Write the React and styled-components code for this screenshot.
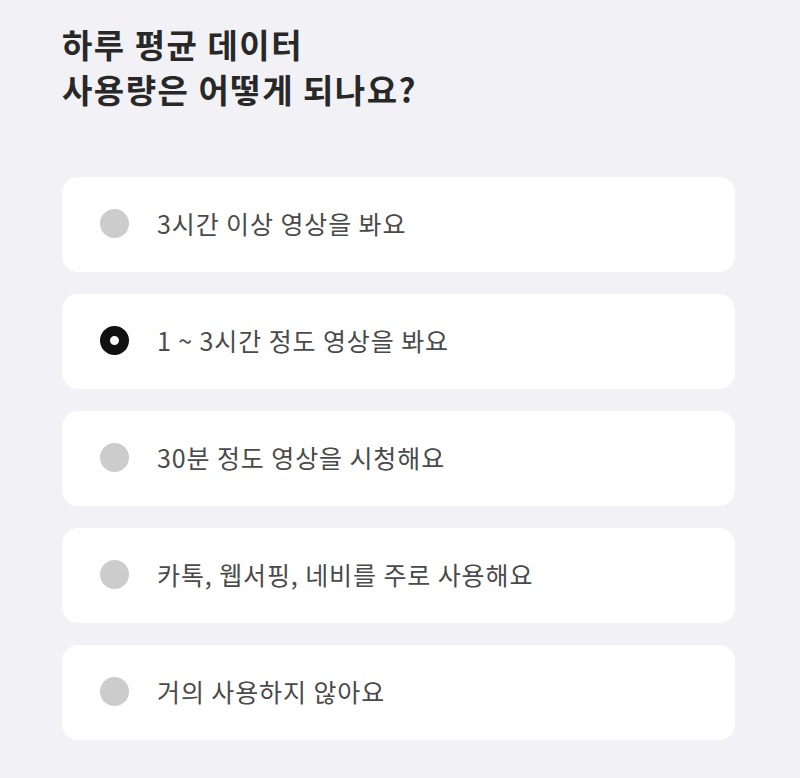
import React, { useState } from "react";
import styled, { createGlobalStyle } from "styled-components";

const options = [
  "3시간 이상 영상을 봐요",
  "1 ~ 3시간 정도 영상을 봐요",
  "30분 정도 영상을 시청해요",
  "카톡, 웹서핑, 네비를 주로 사용해요",
  "거의 사용하지 않아요",
];

const App = () => {
  const [selected, setSelected] = useState(1);
  return (
    <Page>
      <GlobalStyle />
      <Title>
        하루 평균 데이터
        <br />
        사용량은 어떻게 되나요?
      </Title>
      <List>
        {options.map((label, i) => (
          <Option key={label} onClick={() => setSelected(i)}>
            <Radio checked={selected === i} />
            <Label>{label}</Label>
          </Option>
        ))}
      </List>
    </Page>
  );
};

export default App;

const GlobalStyle = createGlobalStyle`
  body {
    margin: 0;
    background: #f2f2f6;
    font-family: "Noto Sans CJK KR", "Noto Sans", sans-serif;
  }
`;
const Page = styled.div`
  padding: 22px 0 0 62px;
  width: 673px;
`;
const Title = styled.h1`
  margin: 0 0 65px;
  font-size: 33px;
  line-height: 45px;
  font-weight: 700;
  color: #282828;
  letter-spacing: 1.5px;
`;
const List = styled.div`
  display: flex;
  flex-direction: column;
  gap: 22px;
`;
const Option = styled.div`
  display: flex;
  align-items: center;
  height: 95px;
  padding: 0 38px;
  box-sizing: border-box;
  background: #fff;
  border-radius: 16px;
  cursor: pointer;
`;
const Radio = styled.span`
  flex: none;
  width: 29px;
  height: 29px;
  border-radius: 50%;
  box-sizing: border-box;
  background: ${(p) => (p.checked ? "#fff" : "#cccccc")};
  border: ${(p) => (p.checked ? "10px solid #111" : "none")};
  margin-top: -3px;
`;
const Label = styled.span`
  margin-left: 28px;
  font-size: 25px;
  color: #4a4a4a;
  letter-spacing: 0.9px;
  margin-top: -4px;
`;
